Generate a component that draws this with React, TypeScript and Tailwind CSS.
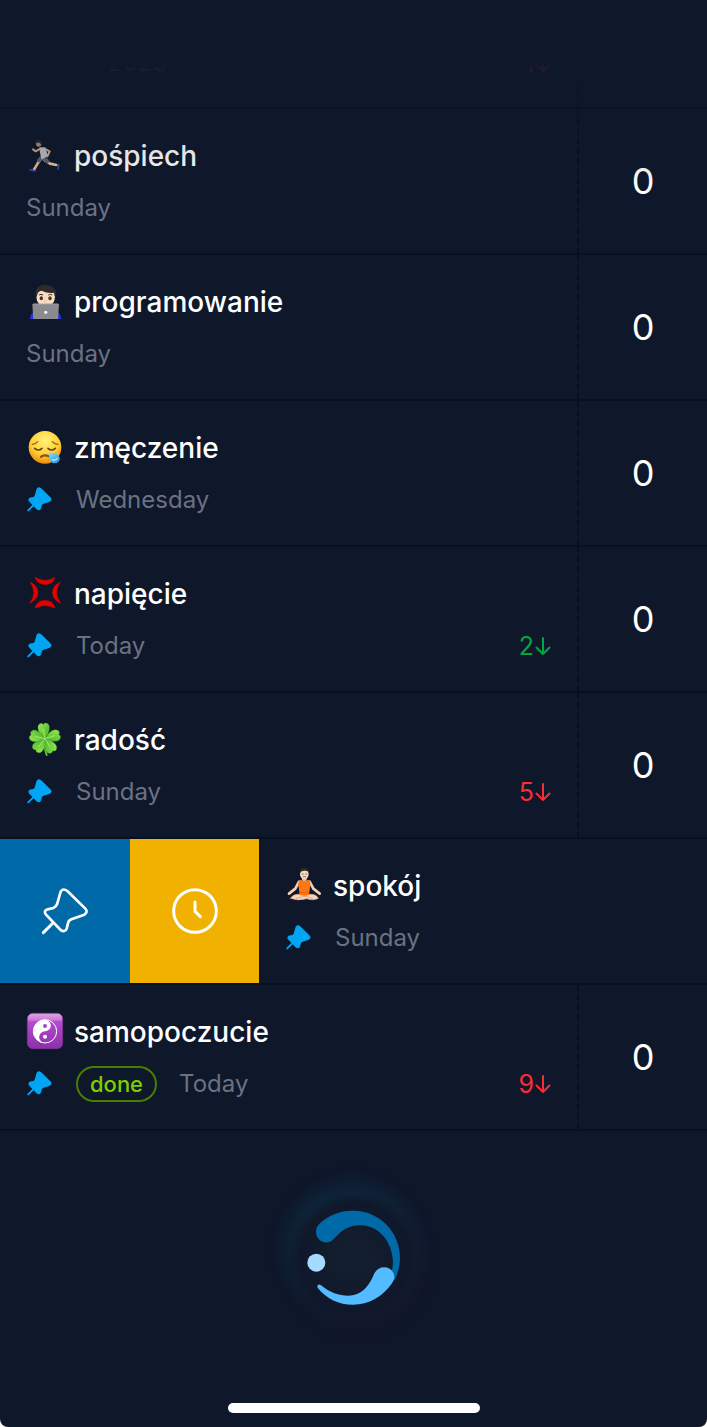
import React from 'react';

type EmojiName = 'runner' | 'coder' | 'sleepy' | 'anger' | 'clover' | 'lotus' | 'yinyang';

interface Tracker {
  name: string;
  emoji: EmojiName;
  day: string;
  pinned?: boolean;
  done?: boolean;
  trend?: number;
  trendColor?: string;
  swiped?: boolean;
}

const trackers: Tracker[] = [
  { name: 'pośpiech', emoji: 'runner', day: 'Sunday' },
  { name: 'programowanie', emoji: 'coder', day: 'Sunday' },
  { name: 'zmęczenie', emoji: 'sleepy', day: 'Wednesday', pinned: true },
  { name: 'napięcie', emoji: 'anger', day: 'Today', pinned: true, trend: 2, trendColor: 'text-[#00a63e]' },
  { name: 'radość', emoji: 'clover', day: 'Sunday', pinned: true, trend: 5, trendColor: 'text-[#fb2c36]' },
  { name: 'spokój', emoji: 'lotus', day: 'Sunday', pinned: true, swiped: true },
  { name: 'samopoczucie', emoji: 'yinyang', day: 'Today', pinned: true, done: true, trend: 9, trendColor: 'text-[#fb2c36]' },
];

const Runner = () => (
  <g strokeLinecap="round" strokeLinejoin="round" fill="none">
    <path d="M47 60 L35 76 L24 95" stroke="#e8b68d" strokeWidth="8" />
    <path d="M55 66 L72 77 L91 81" stroke="#f0be98" strokeWidth="8" />
    <path d="M12 95 L27 99" stroke="#2f4bb0" strokeWidth="5" />
    <path d="M98 80 L96 93" stroke="#2f4bb0" strokeWidth="5" />
    <path d="M49 57 L39 67 M54 60 L64 70" stroke="#5d5e66" strokeWidth="12" />
    <path d="M39 34 L29 40 L21 34" stroke="#cda080" strokeWidth="6" />
    <path d="M43 31 L56 31 L61 52 L49 60 Z" fill="#b9bcc6" stroke="#b9bcc6" strokeWidth="7" />
    <path d="M61 35 L71 40 L64 55" stroke="#d8aa88" strokeWidth="6" />
    <ellipse cx="38" cy="17" rx="8" ry="9" fill="#b08a72" />
    <path d="M28 14 Q30 5 40 6 Q50 8 47 20 Q42 19 41 14 Z" fill="#2a2728" />
  </g>
);

const Coder = () => (
  <g>
    <path d="M12 105 Q13 89 24 84 L94 84 Q104 90 106 105 Z" fill="#2635e0" />
    <ellipse cx="59" cy="38" rx="28" ry="31" fill="#f8dcc4" />
    <path d="M29 41 Q24 10 43 5 Q61 -2 77 8 Q94 14 89 41 Q85 36 84 26 Q65 29 47 20 Q35 21 34 32 Q33 38 29 41 Z" fill="#302a29" />
    <path d="M39 33 Q45 29 51 33 M67 33 Q73 29 79 33" stroke="#433024" strokeWidth="3" fill="none" />
    <ellipse cx="46" cy="43" rx="5" ry="6" fill="#513318" />
    <ellipse cx="72" cy="43" rx="5" ry="6" fill="#513318" />
    <path d="M57 45 L55 53 L62 53" stroke="#e5b998" strokeWidth="2" fill="none" />
    <path d="M22 59 H96 Q99 59 99 62 L96 105 H22 L19 62 Q19 59 22 59 Z" fill="#8b8b8f" />
    <path d="M22 60 H96" stroke="#aeaeb3" strokeWidth="2" />
    <circle cx="59" cy="85" r="5" fill="#f2f2f4" />
  </g>
);

const Sleepy = () => (
  <g fill="none" strokeLinecap="round">
    <defs>
      <radialGradient id="face" cx="50%" cy="30%" r="72%">
        <stop offset="0" stopColor="#fff47a" />
        <stop offset="0.6" stopColor="#ffcf36" />
        <stop offset="1" stopColor="#ee8404" />
      </radialGradient>
      <linearGradient id="tear" x1="0" y1="0" x2="1" y2="1">
        <stop offset="0" stopColor="#8fe0ff" />
        <stop offset="1" stopColor="#1c93dc" />
      </linearGradient>
    </defs>
    <circle cx="57" cy="52" r="49" fill="url(#face)" />
    <path d="M19 43 Q29 42 35 35 M79 35 Q86 42 96 43" stroke="#9c610e" strokeWidth="4" />
    <path d="M26 55 Q37 65 48 55 M66 55 Q77 65 88 55" stroke="#6e4107" strokeWidth="5" />
    <path d="M45 80 Q57 73 68 79" stroke="#8d5711" strokeWidth="7" />
    <path d="M64 69 Q80 67 92 71 Q105 81 100 92 Q92 103 79 98 Q69 92 70 82 Q70 74 64 69 Z" fill="url(#tear)" />
    <path d="M80 89 Q87 93 93 86" stroke="#b7f0ff" strokeWidth="4" />
  </g>
);

const Anger = () => (
  <g fill="#e50000" stroke="#a80000" strokeWidth="1">
    <path d="M27 3 Q57 23 87 3 Q89 4 85 10 Q76 26 57 26 Q38 26 29 10 Q25 4 27 3 Z" />
    <path d="M27 97 Q57 81 87 97 Q89 95 85 89 Q76 73 57 73 Q38 73 29 89 Q25 95 27 97 Z" />
    <path d="M12 19 Q34 50 11 81 Q13 83 19 78 Q36 66 36 50 Q36 31 18 21 Q13 17 12 19 Z" />
    <path d="M103 19 Q81 50 104 81 Q102 83 96 78 Q79 66 79 50 Q79 31 97 21 Q102 17 103 19 Z" />
  </g>
);

const leaf = 'M57 50 C46 39 38 24 41 12 C44 2 54 0 58 7 C65 -1 76 7 75 17 C74 31 66 41 57 50 Z';

const Clover = () => (
  <g>
    <defs>
      <linearGradient id="leaf" x1="0" y1="0" x2="1" y2="1">
        <stop offset="0" stopColor="#9ce957" />
        <stop offset="1" stopColor="#3dae25" />
      </linearGradient>
    </defs>
    <path d="M56 50 Q53 75 62 99" stroke="#5fbd37" strokeWidth="6" strokeLinecap="round" fill="none" />
    {[-8, 72, 146, 218, 284].map((angle) => (
      <path key={angle} d={leaf} fill="url(#leaf)" stroke="#298b20" strokeWidth="1" transform={`rotate(${angle} 57 50)`} />
    ))}
    <path d="M57 50 L51 20 M57 50 L86 41 M57 50 L73 76 M57 50 L37 75 M57 50 L27 43" stroke="#c2f58b" strokeWidth="2" fill="none" />
  </g>
);

const Lotus = () => (
  <g strokeLinecap="round" strokeLinejoin="round">
    <path d="M42 41 L31 62 L12 77 M74 41 L85 62 L104 77" stroke="#f4cfb2" strokeWidth="8" fill="none" />
    <path d="M17 91 Q24 77 46 79 H70 Q94 77 100 91 Q87 99 65 92 Q38 100 17 91 Z" fill="#f6d5bc" stroke="#dfa986" strokeWidth="2" />
    <path d="M34 91 L67 82 M82 91 L55 83" stroke="#cf9370" strokeWidth="2" />
    <path d="M48 35 Q58 43 68 35 Q78 38 76 51 L72 80 Q58 85 44 80 L40 51 Q38 39 48 35 Z" fill="#ff7714" />
    <path d="M45 72 Q58 79 71 72" stroke="#d85409" strokeWidth="2" fill="none" />
    <path d="M51 28 H65 V37 Q58 43 51 37 Z" fill="#e7b996" />
    <ellipse cx="58" cy="18" rx="13" ry="16" fill="#f8dcc5" />
    <path d="M45 15 Q42 0 55 1 Q72 -3 72 15 Q68 7 60 8 Q49 7 45 15 Z" fill="#302928" />
    <path d="M51 18 H55 M62 18 H66 M55 26 H62" stroke="#633e31" strokeWidth="2" />
  </g>
);

const YinYang = () => (
  <g>
    <defs>
      <linearGradient id="tile" x1="0" y1="0" x2="0" y2="1">
        <stop offset="0" stopColor="#dda7e5" />
        <stop offset="0.18" stopColor="#cd7ada" />
        <stop offset="0.24" stopColor="#b44bcf" />
        <stop offset="1" stopColor="#8a31a9" />
      </linearGradient>
    </defs>
    <rect x="4" y="-2" width="106" height="106" rx="16" fill="url(#tile)" stroke="#863099" strokeWidth="2" />
    <circle cx="57" cy="52" r="35" fill="none" stroke="#fff" strokeWidth="3" />
    {/* light half: left side, bulging right at the top and hollowed at the bottom */}
    <path d="M57 17 A35 35 0 0 0 57 87 A17.5 17.5 0 0 1 57 52 A17.5 17.5 0 0 0 57 17 Z" fill="#fff" />
    <circle cx="57" cy="36" r="6" fill="#a747c2" />
    <circle cx="57" cy="68" r="6" fill="#fff" />
  </g>
);

const emojis: Record<EmojiName, React.FC> = {
  runner: Runner,
  coder: Coder,
  sleepy: Sleepy,
  anger: Anger,
  clover: Clover,
  lotus: Lotus,
  yinyang: YinYang,
};

const Emoji: React.FC<{ name: EmojiName }> = ({ name }) => {
  const Drawing = emojis[name];
  return (
    <svg viewBox="0 0 108 108" className="h-9 w-9 shrink-0 overflow-visible" aria-hidden="true">
      <Drawing />
    </svg>
  );
};

const pinBody =
  'M183 182 Q190 170 203 180 L257 233 Q266 243 254 251 L215 265 Q206 269 205 277 L201 293 Q196 305 183 297 L139 251 Q130 240 144 235 L161 231 Q169 228 172 220 Z';

const PinIcon: React.FC<{ filled?: boolean; className?: string }> = ({ filled, className }) => (
  <svg
    viewBox={filled ? '118 170 150 150' : '124 168 144 144'}
    className={className}
    fill={filled ? 'currentColor' : 'none'}
    stroke="currentColor"
    strokeWidth={8}
    strokeLinecap="round"
    strokeLinejoin="round"
    aria-hidden="true"
  >
    <path d={pinBody} />
    <path d="M131 305 L160 276" strokeWidth={filled ? 11 : 9} />
  </svg>
);

const ClockIcon: React.FC<{ className?: string }> = ({ className }) => (
  <svg viewBox="0 0 144 144" className={className} fill="none" stroke="currentColor" strokeWidth={9} strokeLinecap="round" strokeLinejoin="round" aria-hidden="true">
    <circle cx="72" cy="72" r="64" />
    <path d="M72 45 V73 L88 89" />
  </svg>
);

const Trend: React.FC<{ value: number; className?: string }> = ({ value, className }) => (
  <span className={`ml-auto flex items-center gap-px text-[25px] ${className}`}>
    {value}
    <svg viewBox="0 0 16 20" className="h-5 w-4" fill="none" stroke="currentColor" strokeWidth={2} strokeLinecap="round" strokeLinejoin="round" aria-hidden="true">
      <path d="M8 2 V18 M1.5 11.5 L8 18 L14.5 11.5" />
    </svg>
  </span>
);

const CountButton: React.FC<{ label: string }> = ({ label }) => (
  <button type="button" aria-label={label} className="w-[130px] shrink-0 border-l-2 border-dashed border-[#080f1e] text-4xl text-white">
    0
  </button>
);

const TrackerRow: React.FC<{ tracker: Tracker }> = ({ tracker }) => {
  const { name, emoji, day, pinned, done, trend, trendColor, swiped } = tracker;

  return (
    <li className="flex min-h-[146px] border-b-2 border-[#080f1e]">
      {swiped && (
        <div className="flex shrink-0">
          <button type="button" aria-label="Pin" className="flex w-[130px] items-center justify-center bg-[#0069a8] text-white">
            <PinIcon className="h-12 w-12" />
          </button>
          <button type="button" aria-label="Remind later" className="flex w-[129px] items-center justify-center bg-[#f0b100] text-white">
            <ClockIcon className="h-12 w-12" />
          </button>
        </div>
      )}
      <div className="flex min-w-0 flex-1 flex-col justify-center gap-4 px-[26px] pt-0.5">
        <div className="flex items-center gap-3">
          <Emoji name={emoji} />
          <h2 className="text-[28px] leading-9 font-medium text-white">{name}</h2>
        </div>
        <div className="flex items-center text-2xl leading-9 text-[#6a7282]">
          {pinned && <PinIcon filled className="mr-6 h-[26px] w-[26px] text-[#00a6f4]" />}
          {done && (
            <span className="mr-[22px] flex h-9 items-center rounded-full border-2 border-[#497d00] px-3 text-[22px] font-medium text-[#7ccf00]">done</span>
          )}
          <span>{day}</span>
          {trend && <Trend value={trend} className={trendColor} />}
        </div>
      </div>
      {!swiped && <CountButton label={`Add ${name}`} />}
    </li>
  );
};

const Loader = () => (
  <div className="flex justify-center pt-[66px]" role="status" aria-label="Loading">
    <div className="relative flex h-[120px] w-[120px] items-center justify-center">
      <div className="absolute inset-0 rounded-full bg-[radial-gradient(circle,#14202f_0%,#0f172a_70%)] shadow-[-3px_-8px_22px_rgba(14,116,144,0.28),4px_8px_24px_rgba(120,50,50,0.1)] blur-xs" />
      <svg viewBox="162 172 300 300" className="relative h-[100px] w-[100px]" aria-hidden="true">
        <path
          d="M205 226 C233 196 270 183 310 183 C387 183 450 246 450 324 C450 348 444 371 433 392 L425 365 C430 349 430 332 426 314 C416 262 378 227 330 227 C301 227 280 238 262 257 L249 270 C238 281 220 281 208 270 C195 258 195 239 205 226 Z"
          fill="#0069a8"
        />
        <path
          d="M203 414 C199 408 207 401 213 407 C240 429 266 438 295 438 C330 438 355 413 370 378 C376 362 387 353 403 353 C420 353 433 366 433 383 C433 390 430 395 426 401 C398 442 356 465 309 465 C267 465 229 447 203 414 Z"
          fill="#53bbff"
        />
        <circle cx="199" cy="339" r="27" fill="#a4dbff" />
      </svg>
    </div>
  </div>
);

const App: React.FC = () => (
  <div className="bg-white">
    <main className="relative flex min-h-screen flex-col overflow-hidden rounded-b-lg bg-[#0f172a] font-['Inter','Liberation_Sans',sans-serif]">
      <div className="flex min-h-[109px] border-b-2 border-[#080f1e]">
        <div className="flex flex-1 items-end px-[26px] pb-[26px] text-2xl leading-9 text-[#6a7282]">
          <span className="ml-[82px] opacity-70">2023</span>
          <Trend value={1} className="text-[#fb2c36]" />
        </div>
        <div className="w-[130px] border-l-2 border-dashed border-[#080f1e]" />
      </div>
      <ul>
        {trackers.map((tracker) => (
          <TrackerRow key={tracker.name} tracker={tracker} />
        ))}
      </ul>
      <Loader />
      <div className="mx-auto mt-auto mb-[14px] h-[10px] w-[252px] rounded-full bg-white" />
      {/* fade under the status bar */}
      <div className="pointer-events-none absolute inset-x-0 top-0 h-[210px] bg-[linear-gradient(to_bottom,#0f172a_62px,rgba(15,23,42,0.84)_74px,rgba(15,23,42,0.5)_106px,rgba(15,23,42,0.15)_145px,transparent_190px)]" />
    </main>
  </div>
);

export default App;
